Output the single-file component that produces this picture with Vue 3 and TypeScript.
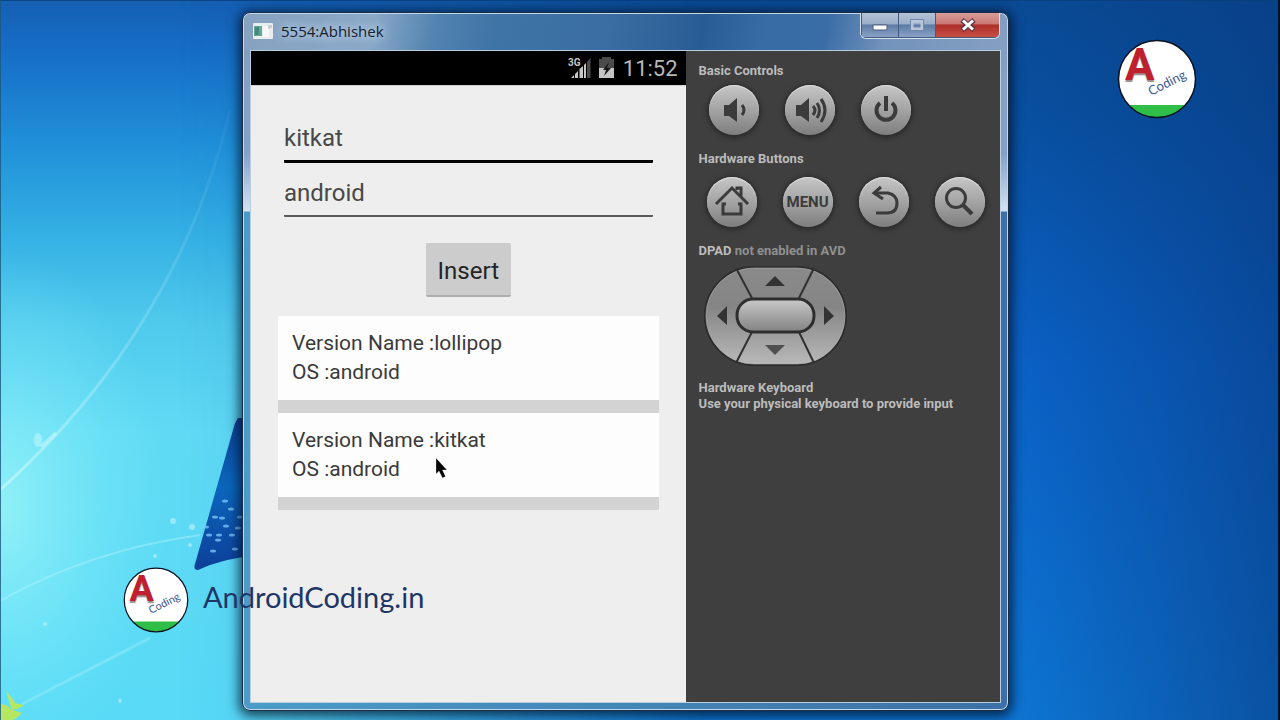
<script setup lang="ts">
import { ref } from 'vue'

interface Version {
  name: string
  os: string
}

const versionName = ref('kitkat')
const osName = ref('android')
const versions = ref<Version[]>([
  { name: 'lollipop', os: 'android' },
  { name: 'kitkat', os: 'android' },
])

function insert(): void {
  versions.value.push({ name: versionName.value, os: osName.value })
}

const sparkles = [
  [222, 518], [231, 509], [240, 517], [219, 535], [209, 535], [226, 526], [232, 535],
  [238, 528], [213, 551], [218, 540], [235, 549], [206, 527], [215, 517], [225, 501],
]
</script>

<template>
  <main class="desktop">
    <svg class="wallpaper" viewBox="0 0 1280 720" preserveAspectRatio="none" aria-hidden="true">
      <defs>
        <linearGradient id="sky" x1="0" y1="0" x2="0" y2="1">
          <stop offset="0" stop-color="#155fb4" />
          <stop offset="0.07" stop-color="#166dc5" />
          <stop offset="0.2" stop-color="#2090d9" />
          <stop offset="0.33" stop-color="#35b1e4" />
          <stop offset="0.45" stop-color="#50caec" />
          <stop offset="0.6" stop-color="#60daf4" />
          <stop offset="1" stop-color="#59daf6" />
        </linearGradient>
        <linearGradient id="deep" x1="0" y1="0" x2="0" y2="1">
          <stop offset="0" stop-color="#0a4a94" />
          <stop offset="0.15" stop-color="#084f9f" />
          <stop offset="0.5" stop-color="#0a60c4" />
          <stop offset="1" stop-color="#0d74d2" />
        </linearGradient>
        <linearGradient id="fade" x1="0" y1="0" x2="1" y2="0">
          <stop offset="0.14" stop-color="#fff" stop-opacity="0" />
          <stop offset="0.2" stop-color="#fff" stop-opacity="0.07" />
          <stop offset="0.55" stop-color="#fff" />
        </linearGradient>
        <mask id="right"><rect width="1280" height="720" fill="url(#fade)" /></mask>
        <linearGradient id="corner" x1="0" y1="0" x2="1" y2="0">
          <stop offset="0.8" stop-color="#083a80" stop-opacity="0" />
          <stop offset="1" stop-color="#083a80" stop-opacity="0.6" />
        </linearGradient>
        <radialGradient id="glow">
          <stop offset="0" stop-color="#a8faf8" stop-opacity="0.7" />
          <stop offset="1" stop-color="#7defff" stop-opacity="0" />
        </radialGradient>
        <linearGradient id="pane" x1="0" y1="0" x2="0" y2="1">
          <stop offset="0" stop-color="#0a3f95" />
          <stop offset="0.45" stop-color="#0b66bd" />
          <stop offset="1" stop-color="#0d3f99" />
        </linearGradient>
        <linearGradient id="ray" x1="0" y1="1" x2="1" y2="0">
          <stop offset="0" stop-color="#dffcff" stop-opacity="0.5" />
          <stop offset="1" stop-color="#9fdcf5" stop-opacity="0.05" />
        </linearGradient>
      </defs>
      <rect width="1280" height="720" fill="url(#sky)" />
      <ellipse cx="0" cy="510" rx="170" ry="260" fill="url(#glow)" />
      <rect width="1280" height="720" fill="url(#deep)" mask="url(#right)" />
      <rect width="1280" height="720" fill="url(#corner)" />
      <path d="M0 490Q178 330 230 110" fill="none" stroke="url(#ray)" stroke-width="3" />
      <path d="M0 601Q90 550 200 535" fill="none" stroke="#b8f6fc" stroke-opacity="0.4" stroke-width="2" />
      <path d="M22 704L150 638" fill="none" stroke="#b8f6fc" stroke-opacity="0.3" stroke-width="3" />
      <ellipse cx="38" cy="440" rx="4" ry="7" fill="#c4f7fb" opacity="0.55" />
      <path d="M41 447L56 433" stroke="#c4f7fb" stroke-opacity="0.55" stroke-width="4" />
      <path d="M238 418H262V555Q225 557 198 570Q193 570 195 564L235 423Z" fill="url(#pane)" />
      <g fill="#7ecbff" opacity="0.75">
        <ellipse v-for="([x, y], i) in sparkles" :key="i" :cx="x" :cy="y" rx="3" ry="1.5" />
      </g>
      <g fill="#d2faff" opacity="0.5">
        <circle cx="173" cy="521" r="3" /><circle cx="192" cy="527" r="3" /><circle cx="190" cy="545" r="2" />
        <circle cx="155" cy="556" r="2" /><circle cx="120" cy="701" r="2" /><circle cx="45" cy="624" r="2" />
      </g>
      <path d="M0 704Q8 704 12 711L6 691Q14 700 15 703L24 705Q16 711 10 709L22 713Q15 720 12 720H0Z" fill="#b5e860" />
      <rect width="1280" height="1" fill="#0a3f78" opacity="0.8" />
      <rect width="1" height="720" fill="#1a587c" opacity="0.8" />
      <rect x="1278" width="2" height="720" fill="#041024" />
    </svg>

    <section class="window" aria-label="5554:Abhishek">
      <header class="titlebar">
        <svg class="app-icon" viewBox="0 0 20 16" aria-hidden="true">
          <rect x="0" y="0" width="20" height="16" rx="1" fill="#e9edf0" />
          <rect x="1" y="3" width="8" height="10" fill="#66a795" />
          <rect x="2" y="4" width="4" height="8" fill="#46877b" />
          <rect x="10" y="3" width="6" height="11" fill="#f8f8f8" />
          <path d="M16 2V6M18 2V5" stroke="#a8aeb6" />
        </svg>
        <h1 class="title">5554:Abhishek</h1>
        <div class="caption-buttons">
          <button class="caption minimize" type="button" aria-label="Minimize">
            <svg viewBox="0 0 16 16"><rect x="1" y="8" width="14" height="5" rx="1" fill="#fff" stroke="#4c5b78" /></svg>
          </button>
          <button class="caption maximize" type="button" aria-label="Maximize" disabled>
            <svg viewBox="0 0 16 16"><path d="M3 4H13V12H3Z" fill="none" stroke="#b9c6d9" stroke-width="3" /><path d="M1.5 2.5H14.5V13.5H1.5Z" fill="none" stroke="#7188aa" /></svg>
          </button>
          <button class="caption close" type="button" aria-label="Close">
            <svg viewBox="0 0 16 16"><path d="M2 3L14 13M14 3L2 13" stroke="#5b3441" stroke-width="5" /><path d="M3 3.5L13 12.5M13 3.5L3 12.5" stroke="#fff" stroke-width="3" /></svg>
          </button>
        </div>
      </header>

      <div class="client">
        <div class="phone">
          <div class="statusbar">
            <svg class="signal" viewBox="0 0 23 24" role="img" aria-label="3G signal">
              <text x="0" y="10" font-family="Roboto, sans-serif" font-weight="700" font-size="10" fill="#c4c4c4">3G</text>
              <path d="M3 22L6 19V22ZM7 18L10 15V22H7ZM11.5 13L15 10V22H11.5ZM16 9L18 7V22H16Z" fill="#c8c8c8" />
              <path d="M19 6L22.5 2V22H19Z" fill="#4d4d4d" />
            </svg>
            <svg class="battery" viewBox="0 0 15 22" role="img" aria-label="Battery charging">
              <path d="M3 0H12V2H15V12H0V2H3Z" fill="#4b4b4b" />
              <path d="M0 11H15V21H0Z" fill="#c6c6c6" />
              <path d="M10 5L4 13H7L5 19L12 11H8Z" fill="#171717" />
            </svg>
            <time class="clock">11:52</time>
          </div>

          <div class="screen">
            <form class="form" @submit.prevent="insert">
              <input v-model="versionName" class="field focused" type="text" aria-label="Version name" />
              <input v-model="osName" class="field" type="text" aria-label="OS" />
              <button class="insert" type="submit">Insert</button>
            </form>
            <ul class="versions">
              <li v-for="(version, i) in versions" :key="i" class="version">
                <p>Version Name :{{ version.name }}</p>
                <p>OS :{{ version.os }}</p>
              </li>
            </ul>
          </div>
        </div>

        <aside class="controls">
          <h2>Basic Controls</h2>
          <div class="row basic">
            <button class="key" type="button" aria-label="Volume down">
              <svg viewBox="0 0 50 50">
                <path d="M15 20H20L28 13V37L20 31H15Z" fill="#3b3b3b" />
                <path d="M33 20Q37 25 33 30" class="line" />
              </svg>
            </button>
            <button class="key" type="button" aria-label="Volume up">
              <svg viewBox="0 0 50 50">
                <path d="M11 20H16L24 13V37L16 31H11Z" fill="#3b3b3b" />
                <path d="M28 21Q32 25 28 30M32 18Q37 25 32 33M36 14Q44 25 36 37" class="line" />
              </svg>
            </button>
            <button class="key" type="button" aria-label="Power">
              <svg viewBox="0 0 50 50">
                <path d="M19 18A9.5 9.5 0 1 0 31 18" class="line thick" />
                <path d="M25 11V26" class="line thick" />
              </svg>
            </button>
          </div>

          <h2>Hardware Buttons</h2>
          <div class="row hardware">
            <button class="key" type="button" aria-label="Home">
              <svg viewBox="0 0 50 50">
                <path d="M9 27L25 11L41 27" class="line" />
                <path d="M30 13V11H34V19" class="line" />
                <path d="M19 27H16V37H34V27H31" class="line" />
              </svg>
            </button>
            <button class="key menu" type="button">MENU</button>
            <button class="key" type="button" aria-label="Back">
              <svg viewBox="0 0 50 50">
                <path d="M22 10L15 16L24 22" class="line" />
                <path d="M15 16H29Q38 18 38 26Q38 36 28 36H17" class="line" />
              </svg>
            </button>
            <button class="key" type="button" aria-label="Search">
              <svg viewBox="0 0 50 50">
                <circle cx="21" cy="21" r="9.5" class="line" />
                <path d="M28 28L37 37" class="line thick" />
              </svg>
            </button>
          </div>

          <h2>DPAD <span class="muted">not enabled in AVD</span></h2>
          <svg class="dpad" viewBox="0 0 143 100" role="img" aria-label="Directional pad">
            <defs>
              <linearGradient id="pad" x1="0" y1="0" x2="0" y2="1">
                <stop offset="0" stop-color="#8a8a8a" />
                <stop offset="0.4" stop-color="#858585" />
                <stop offset="1" stop-color="#b9b9b9" />
              </linearGradient>
              <linearGradient id="pill" x1="0" y1="0" x2="0" y2="1">
                <stop offset="0" stop-color="#c9c9c9" />
                <stop offset="1" stop-color="#828282" />
              </linearGradient>
            </defs>
            <rect x="1" y="1" width="141" height="98" rx="49" fill="url(#pad)" stroke="#2c2c2c" stroke-width="2" />
            <rect x="2" y="2" width="139" height="96" rx="48" fill="none" stroke="#b0b0b0" stroke-opacity="0.6" />
            <path d="M32 2L49 34M110 2L94 34M49 64L32 97M94 64L110 97" stroke="#303030" stroke-width="2" />
            <rect x="33" y="33" width="77" height="33" rx="16" fill="url(#pill)" stroke="#2e2e2e" stroke-width="3" />
            <path d="M71 10L61 20H81ZM13 50L23 40V59ZM130 50L120 40V59Z" fill="#333" />
            <path d="M71 89L61 79H81Z" fill="#505050" />
          </svg>

          <h2>Hardware Keyboard<br />Use your physical keyboard to provide input</h2>
        </aside>
      </div>
    </section>

    <svg class="logo corner" viewBox="0 0 80 80" role="img" aria-label="A Coding">
      <circle cx="40" cy="40" r="38.5" fill="#fff" />
      <path d="M11.5 66H68.5A38.5 38.5 0 0 1 11.5 66Z" fill="#2fbf48" />
      <circle cx="40" cy="40" r="38.5" fill="none" stroke="#0b1320" stroke-width="1.5" />
      <text x="8" y="41" class="logo-a">A</text>
      <text x="34" y="57" class="logo-word" transform="rotate(-27 34 57)">Coding</text>
    </svg>

    <div class="watermark">
      <svg class="logo" viewBox="0 0 80 80" role="img" aria-label="A Coding">
        <circle cx="40" cy="40" r="38.5" fill="#fff" />
        <path d="M11.5 66H68.5A38.5 38.5 0 0 1 11.5 66Z" fill="#2fbf48" />
        <circle cx="40" cy="40" r="38.5" fill="none" stroke="#0b1320" stroke-width="1.5" />
        <text x="8" y="41" class="logo-a">A</text>
        <text x="34" y="57" class="logo-word" transform="rotate(-27 34 57)">Coding</text>
      </svg>
      <span>AndroidCoding.in</span>
    </div>

    <svg class="cursor" viewBox="0 0 13 22" aria-hidden="true">
      <path d="M1 1V17L4 14L7.5 21L10.5 19.5L7.5 13H12Z" fill="#000" stroke="#fff" stroke-opacity="0.6" stroke-width="0.5" />
    </svg>
  </main>
</template>

<style>
body {
  margin: 0;
}
</style>

<style scoped>
.desktop {
  position: relative;
  display: flex;
  box-sizing: border-box;
  min-height: 100vh;
  padding: 12px 271px 9px 242px;
  overflow: hidden;
  font-family: Roboto, 'Liberation Sans', sans-serif;
}

.wallpaper {
  position: absolute;
  inset: 0;
  width: 100%;
  height: 100%;
}

.window {
  position: relative;
  flex: 1;
  display: flex;
  flex-direction: column;
  box-sizing: border-box;
  padding: 0 7px 7px;
  border: 1px solid #1c2c44;
  border-radius: 8px;
  background:
    linear-gradient(to bottom, #7f9abc 0, #86a1c4 80px, #83a0c9 140px, #d5e2f0 198px, transparent 199px),
    linear-gradient(to right, #4b9cc8, #3c6fa8);
  box-shadow: inset 0 0 0 1px #c3d8ea, 0 2px 12px 3px rgba(0, 15, 35, 0.75);
}

.titlebar {
  display: flex;
  align-items: center;
  box-sizing: border-box;
  height: 36px;
  margin: 1px -6px 0;
  padding: 0 0 2px 9px;
  border-radius: 7px 7px 0 0;
  background: linear-gradient(100deg, #86a2c0 0, #8aa8c8 17%, #5384b1 25%, #3f74a6 33%, #3a6ea2 48%, #285c94 60%, #376ca4 68%, #3a6da5 76%, #7493bb 84%, #849fc2 100%);
}

.app-icon {
  width: 20px;
  height: 16px;
}

.title {
  margin: 0 0 0 8px;
  color: #13202e;
  font: 400 15px/20px 'Open Sans', 'Noto Sans', sans-serif;
  text-shadow: 0 0 8px #c4d9ea, 0 0 12px #c4d9ea;
}

.caption-buttons {
  display: flex;
  align-self: flex-start;
  margin: -1px 7px 0 auto;
  border: 1px solid #d5e0ed;
  border-top: 0;
  border-radius: 0 0 6px 6px;
  overflow: hidden;
}

.caption {
  display: grid;
  place-items: center;
  width: 37px;
  height: 25px;
  padding: 0;
  border: 1px solid #43597d;
  border-top: 0;
  border-right: 0;
  background: linear-gradient(#b4c3d6 0, #9cafc9 45%, #5e7ba4 50%, #88a2c5 100%);
}

.caption svg {
  width: 16px;
  height: 16px;
}

.caption.close {
  width: 64px;
  background: linear-gradient(#d99d9a 0, #cb7873 45%, #ad2e2a 50%, #c74f45 100%);
}

.client {
  flex: 1;
  display: flex;
  border: 1px solid #b9cee0;
  background: #3f3f3f;
}

.phone {
  flex: 434 1 0;
  display: flex;
  flex-direction: column;
  background: #eeeeee;
}

.statusbar {
  display: flex;
  align-items: center;
  justify-content: flex-end;
  height: 34px;
  padding-right: 8px;
  background: #000;
}

.signal {
  width: 23px;
  height: 24px;
}

.battery {
  width: 15px;
  height: 22px;
  margin: 0 9px 0 8px;
}

.clock {
  color: #b8b8b8;
  font-size: 22px;
}

.screen {
  padding: 29px 27px 0;
  border-top: 1px solid #cfcfcf;
}

.form {
  display: flex;
  flex-direction: column;
  padding: 0 6px;
}

.field {
  box-sizing: border-box;
  width: 100%;
  height: 47px;
  margin: 0 0 26px;
  padding: 0;
  border: 0;
  border-bottom: 2px solid #5a5a5a;
  border-radius: 1px;
  outline: 0;
  background: transparent;
  color: #484848;
  font: 400 24px/30px Roboto, sans-serif;
}

.field.focused {
  height: 48px;
  margin-bottom: 7px;
  border-bottom: 3px solid #000;
}

.insert {
  align-self: center;
  height: 54px;
  padding: 3px 12px 0;
  border: 0;
  border-bottom: 2px solid #aeaeae;
  border-radius: 2px;
  background: #cccccc;
  color: #242424;
  font: 400 24px/30px Roboto, sans-serif;
}

.versions {
  margin: 19px 0 0;
  padding: 0;
  list-style: none;
}

.version {
  padding: 13px 14px;
  border-bottom: 13px solid #d3d3d3;
  background: #fdfdfd;
  color: #3a3a3a;
  font-size: 21px;
  line-height: 29px;
}

.version p {
  margin: 0;
}

.controls {
  flex: 315 1 0;
  box-sizing: border-box;
  min-width: 0;
  margin-left: -13px;
  padding: 12px 0 0 26px;
}

.phone,
.controls {
  margin: 0;
}

.client {
  display: grid;
  grid-template-columns: 434fr 314fr;
}

.controls {
  padding-left: 13px;
}

.controls h2 {
  margin: 0;
  color: #bcbcbc;
  font-size: 13px;
  font-weight: 700;
  line-height: 16px;
}

.controls .muted {
  color: #8f8f8f;
}

.row {
  display: flex;
  gap: 26px;
}

.basic {
  margin: 6px 0 16px 10px;
}

.hardware {
  margin: 10px 0 16px 8px;
}

.key {
  display: grid;
  place-items: center;
  width: 50px;
  height: 50px;
  padding: 0;
  border: 0;
  border-radius: 50%;
  background: linear-gradient(#c6c6c6, #a0a0a0 55%, #7e7e7e);
  box-shadow: 0 1px 4px 2px #2b2b2b, inset 0 1px 1px #dedede;
  color: #3b3b3b;
}

.key svg {
  width: 50px;
  height: 50px;
}

.key.menu {
  font: 700 15px/20px Roboto, sans-serif;
}

.line {
  fill: none;
  stroke: #3b3b3b;
  stroke-width: 3;
}

.line.thick {
  stroke-width: 4;
}

.dpad {
  display: block;
  width: 143px;
  height: 100px;
  margin: 7px 0 14px 5px;
}

.logo {
  width: 66px;
  height: 66px;
  overflow: visible;
}

.logo.corner {
  position: absolute;
  top: 39px;
  right: 83px;
  width: 80px;
  height: 80px;
}

.logo-a {
  fill: #c01f2e;
  font: 700 44px Roboto, sans-serif;
  text-shadow: 0 2px 1px #9d8b8b;
}

.logo-word {
  fill: #3b5591;
  font: 400 13px Lato, sans-serif;
}

.watermark {
  position: absolute;
  left: 123px;
  bottom: 87px;
  display: flex;
  gap: 14px;
  color: #1f3566;
  font: 400 29px/60px Lato, sans-serif;
}

.cursor {
  position: absolute;
  left: 435px;
  top: 457px;
  width: 13px;
  height: 22px;
}
</style>
